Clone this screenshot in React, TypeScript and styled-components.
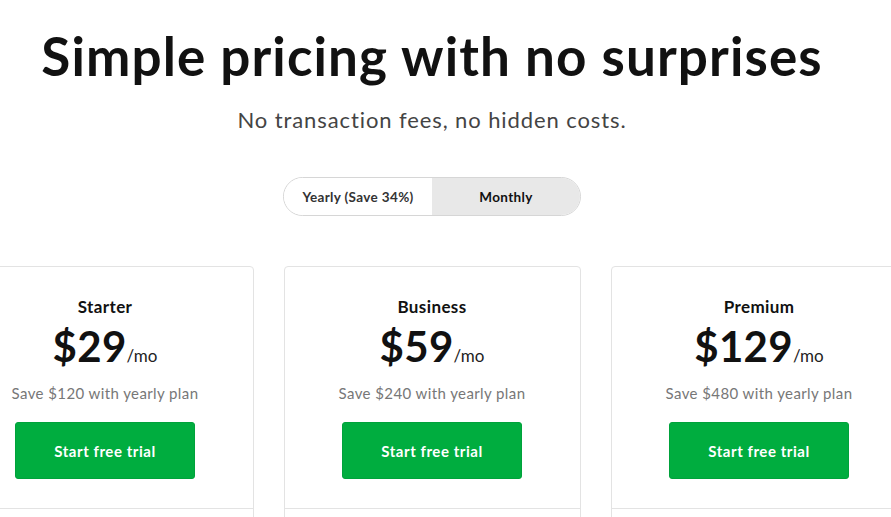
import React, { useState } from 'react'
import styled, { createGlobalStyle } from 'styled-components'

const Global = createGlobalStyle`
  html, body {
    margin: 0;
    padding: 0;
    background: #ffffff;
    overflow: hidden;
  }
  body {
    font-family: 'Lato', 'Liberation Sans', sans-serif;
    color: #111;
  }
`

type Plan = { name: string; price: number; save: number }

const plans: Plan[] = [
  { name: 'Starter', price: 29, save: 120 },
  { name: 'Business', price: 59, save: 240 },
  { name: 'Premium', price: 129, save: 480 },
]

const App = () => {
  const [billing, setBilling] = useState<'yearly' | 'monthly'>('monthly')

  return (
    <Page>
      <Global />
      <Title>Simple pricing with no surprises</Title>
      <Sub>No transaction fees, no hidden costs.</Sub>
      <Toggle>
        <ToggleBtn active={billing === 'yearly'} onClick={() => setBilling('yearly')}>
          Yearly (Save 34%)
        </ToggleBtn>
        <ToggleBtn active={billing === 'monthly'} onClick={() => setBilling('monthly')}>
          Monthly
        </ToggleBtn>
      </Toggle>
      <Cards>
        {plans.map((p) => (
          <Card key={p.name}>
            <CardHead>
              <PlanName>{p.name}</PlanName>
              <Price>
                <Amount>${p.price}</Amount>
                <Per>/mo</Per>
              </Price>
              <Save>Save ${p.save} with yearly plan</Save>
              <Trial>Start free trial</Trial>
            </CardHead>
            <CardBody />
          </Card>
        ))}
      </Cards>
    </Page>
  )
}

export default App

const Page = styled.div`
  width: 864px;
  display: flex;
  flex-direction: column;
  align-items: center;
  padding-top: 24px;
`

const Title = styled.h1`
  margin: 0;
  font-size: 53px;
  line-height: 64px;
  font-weight: 700;
  color: #111;
  letter-spacing: 1.1px;
`

const Sub = styled.p`
  margin: 18px 0 0;
  font-size: 22px;
  line-height: 28px;
  color: #444;
  font-weight: 400;
  letter-spacing: 0.9px;
`

const Toggle = styled.div`
  margin-top: 43px;
  width: 298px;
  height: 39px;
  box-sizing: border-box;
  border: 1px solid #d6d6d6;
  border-radius: 20px;
  overflow: hidden;
  display: flex;
`

const ToggleBtn = styled.div<{ active: boolean }>`
  flex: 1;
  display: flex;
  align-items: center;
  justify-content: center;
  font-size: 13.5px;
  font-weight: 700;
  letter-spacing: 0.35px;
  color: ${(p) => (p.active ? '#111' : '#333')};
  background: ${(p) => (p.active ? '#e8e8e8' : '#fff')};
  cursor: pointer;
`

const Cards = styled.div`
  margin-top: 50px;
  width: 100%;
  display: flex;
  justify-content: center;
  gap: 30px;
`

const Card = styled.div`
  flex: 0 0 297px;
  height: 300px;
  box-sizing: border-box;
  border: 1px solid #e3e3e3;
  border-radius: 4px;
  display: flex;
  flex-direction: column;
`

const CardHead = styled.div`
  height: 242px;
  border-bottom: 1px solid #e3e3e3;
  display: flex;
  flex-direction: column;
  align-items: center;
  padding-top: 30px;
  box-sizing: border-box;
`

const CardBody = styled.div`
  flex: 1;
`

const PlanName = styled.div`
  font-size: 17px;
  line-height: 20px;
  font-weight: 700;
  color: #111;
  letter-spacing: 0.4px;
`

const Price = styled.div`
  margin-top: 4px;
  display: flex;
  align-items: baseline;
`

const Amount = styled.span`
  font-size: 42px;
  line-height: 50px;
  font-weight: 700;
  color: #111;
  letter-spacing: 0.3px;
`

const Per = styled.span`
  font-size: 17px;
  color: #222;
`

const Save = styled.div`
  margin-top: 12px;
  font-size: 15px;
  line-height: 20px;
  color: #777;
  letter-spacing: 0.4px;
`

const Trial = styled.button`
  margin-top: 19px;
  width: 180px;
  height: 57px;
  border: 1px solid #00a23b;
  border-radius: 3px;
  background: #00ad3f;
  color: #fff;
  font-family: inherit;
  font-size: 15px;
  font-weight: 700;
  letter-spacing: 0.55px;
  cursor: pointer;
`
